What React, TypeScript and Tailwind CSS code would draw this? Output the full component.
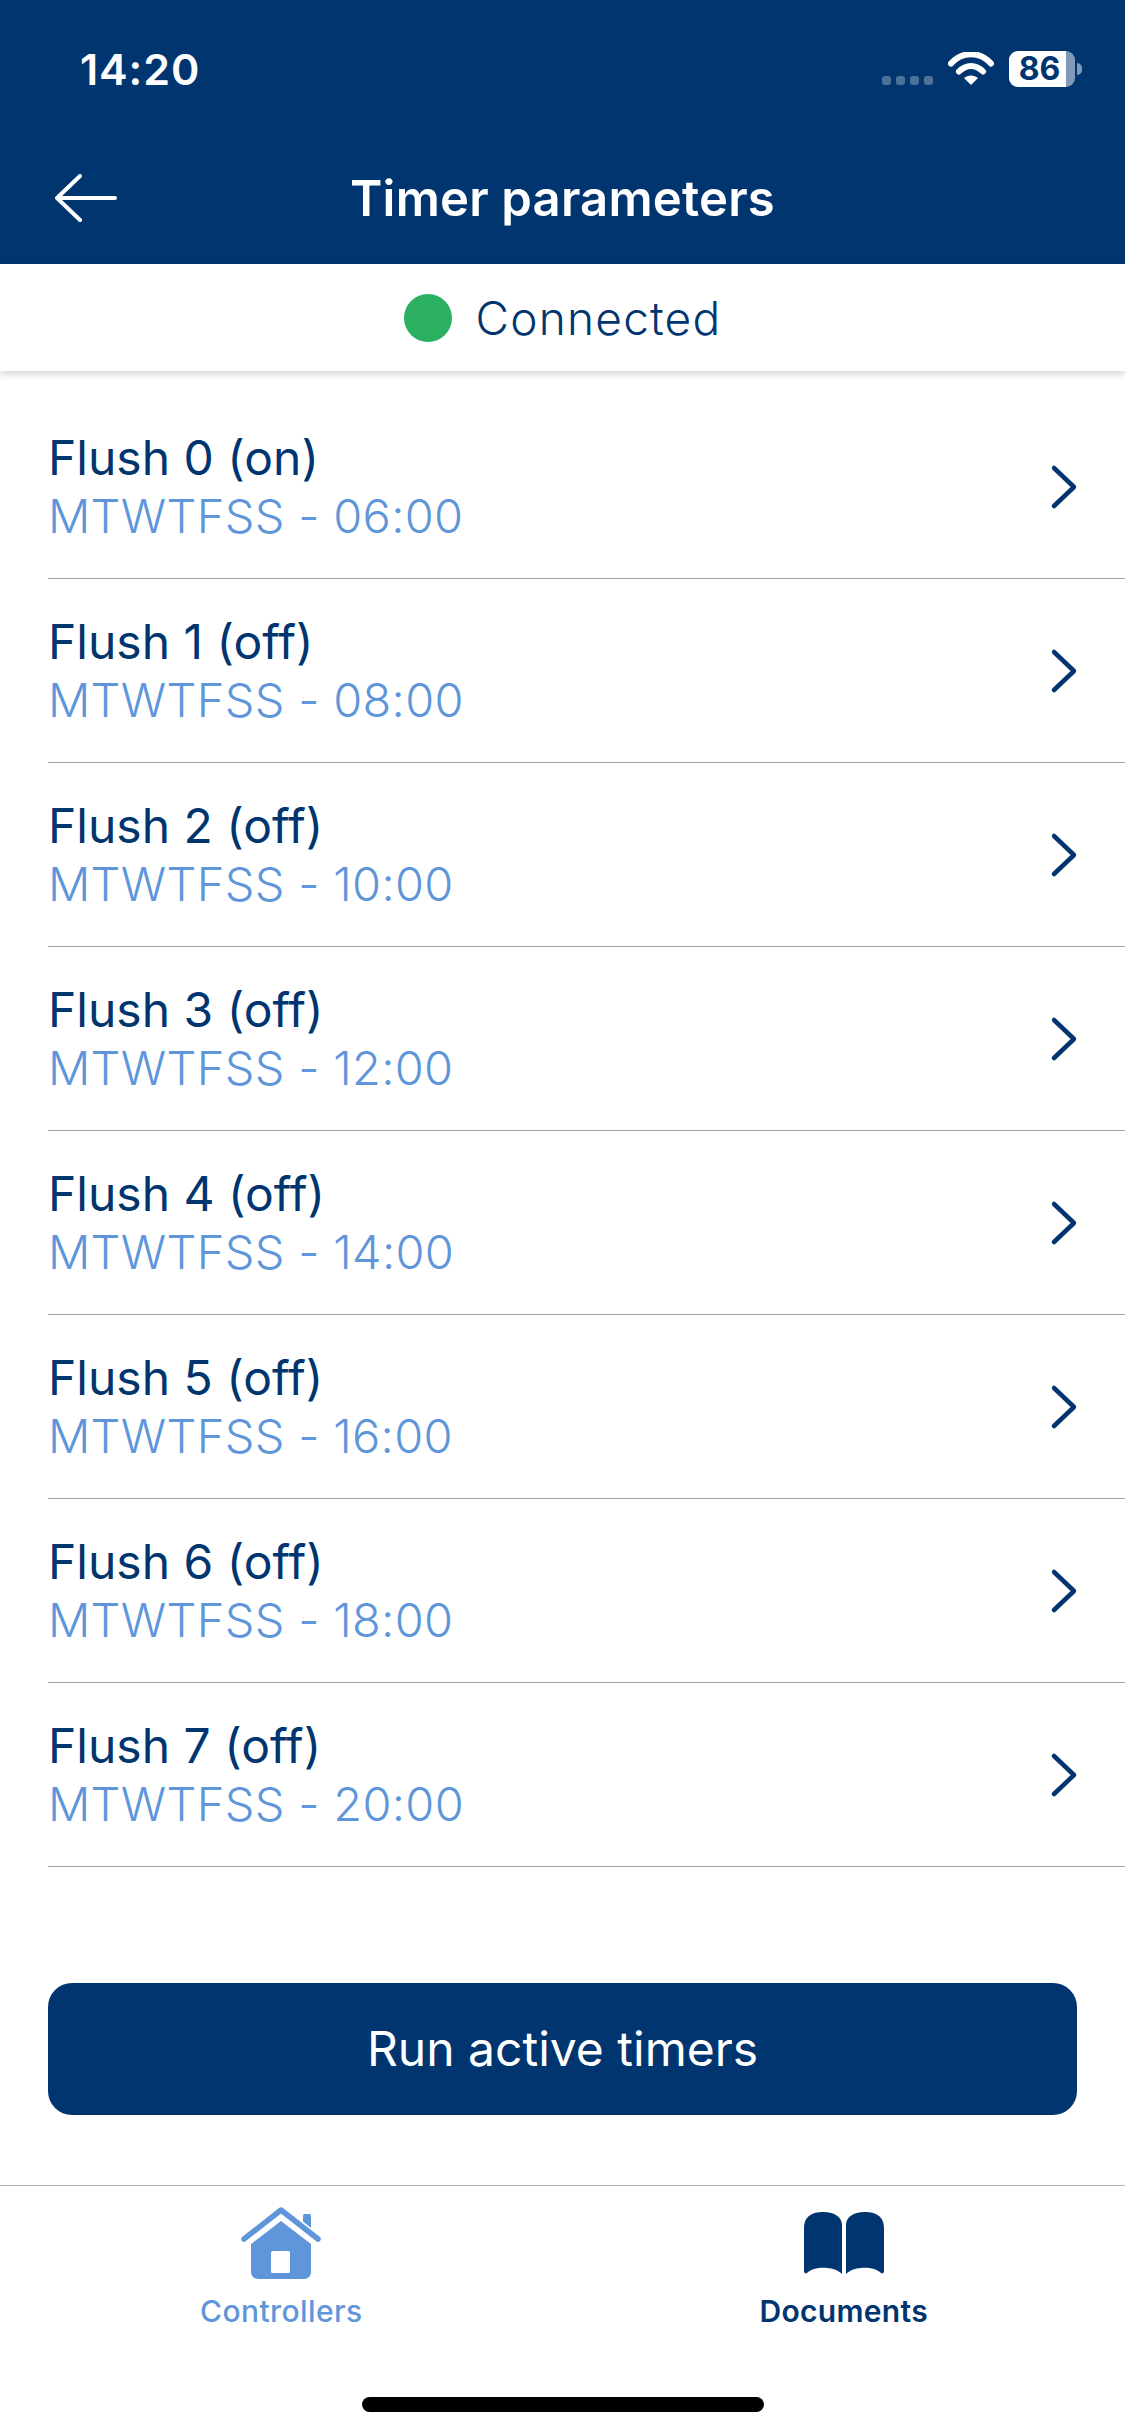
const rows = [
  ["Flush 0 (on)", "MTWTFSS - 06:00"],
  ["Flush 1 (off)", "MTWTFSS - 08:00"],
  ["Flush 2 (off)", "MTWTFSS - 10:00"],
  ["Flush 3 (off)", "MTWTFSS - 12:00"],
  ["Flush 4 (off)", "MTWTFSS - 14:00"],
  ["Flush 5 (off)", "MTWTFSS - 16:00"],
  ["Flush 6 (off)", "MTWTFSS - 18:00"],
  ["Flush 7 (off)", "MTWTFSS - 20:00"],
];

function Wifi() {
  return (
    <svg width="46" height="33" viewBox="0 0 46 33" fill="none">
      <path d="M3 11.5C14-1 32-1 43 11.5" stroke="#fff" strokeWidth="6" strokeLinecap="round" />
      <path d="M11 19.5C18 12 28 12 35 19.5" stroke="#fff" strokeWidth="6" strokeLinecap="round" />
      <path d="M16 26C20 22.5 26 22.5 30 26L23 33Z" fill="#fff" />
    </svg>
  );
}

function Chevron() {
  return (
    <svg width="30" height="46" viewBox="0 0 30 46" fill="none">
      <path d="M5 4L25 23L5 42" stroke="#00356f" strokeWidth="4.5" strokeLinecap="round" strokeLinejoin="round" />
    </svg>
  );
}

function Home() {
  return (
    <svg width="82" height="74" viewBox="0 0 82 74" fill="none">
      <path d="M11 38L41 15L71 38V66C71 70 68 73 64 73H18C14 73 11 70 11 66Z" fill="#5f96d9" />
      <rect x="63" y="8" width="8" height="20" rx="1.5" fill="#5f96d9" />
      <path d="M4 33L41 4L78 33" stroke="#fff" strokeWidth="9" strokeLinecap="round" strokeLinejoin="round" />
      <path d="M4 33L41 4L78 33" stroke="#5f96d9" strokeWidth="5.5" strokeLinecap="round" strokeLinejoin="round" />
      <rect x="31" y="45" width="19" height="22" rx="1.5" fill="#fff" />
    </svg>
  );
}

function Book() {
  return (
    <svg width="80" height="64" viewBox="0 0 80 64" fill="#00356f">
      <path d="M38 13C38 6 32 0 19 0C6 0 0 6 0 16V59C0 61 2 62 3 61C10 54 30 54 38 62Z" />
      <path d="M42 13C42 6 48 0 61 0C74 0 80 6 80 16V59C80 61 78 62 77 61C70 54 50 54 42 62Z" />
    </svg>
  );
}

export default function App() {
  return (
    <div className="flex h-[2436px] w-[1125px] flex-col bg-white font-['Inter',sans-serif] text-[#00356f]">
      <div className="flex h-[264px] flex-col bg-[#00356f] text-white">
        <div className="flex h-[140px] items-start justify-between pl-[80px] pr-[43px] pt-[45px]">
          <span className="text-[43px] font-semibold leading-[48px] tracking-[0.9px]">14:20</span>
          <div className="flex items-start gap-[15px] pt-[6px]">
            <div className="mt-[25px] flex gap-[5px] opacity-30">
              <span className="h-[9px] w-[9px] rounded-[3px] bg-white" />
              <span className="h-[9px] w-[9px] rounded-[3px] bg-white" />
              <span className="h-[9px] w-[9px] rounded-[3px] bg-white" />
              <span className="h-[9px] w-[9px] rounded-[3px] bg-white" />
            </div>
            <div className="mt-[1px]">
              <Wifi />
            </div>
            <div className="flex items-center">
              <div className="flex h-[36px] w-[66px] items-center rounded-[9px] bg-white/50">
                <div className="flex h-full w-[57px] items-center justify-center rounded-l-[9px] bg-white pl-[4px] text-[32px] font-bold leading-none text-[#00356f]">
                  86
                </div>
              </div>
              <span className="ml-[2px] h-[12px] w-[5px] rounded-r-full bg-white/50" />
            </div>
          </div>
        </div>
        <div className="relative flex h-[124px] items-start justify-center pt-[30px]">
          <svg className="absolute left-[55px] top-[34px]" width="62" height="48" viewBox="0 0 62 48" fill="none">
            <path d="M25 2L2 24L25 46M2 24H60" stroke="#fff" strokeWidth="4" strokeLinecap="round" strokeLinejoin="round" />
          </svg>
          <span className="text-[49px] font-semibold leading-[58px] tracking-[0.2px]">Timer parameters</span>
        </div>
      </div>

      <div className="z-10 flex h-[107px] items-center justify-center gap-[24px] bg-white shadow-[0_3px_8px_rgba(0,0,0,0.18)]">
        <span className="h-[48px] w-[48px] rounded-full bg-[#2bb062]" />
        <span className="text-[46px] font-light leading-none tracking-[1.2px]">Connected</span>
      </div>

      <div className="mt-[24px] flex flex-col pl-[48px]">
        {rows.map(([title, sub]) => (
          <div key={title} className="flex h-[184px] items-center justify-between border-b-[1.5px] border-[#9e9e9e] pr-[46px]">
            <div className="flex flex-col">
              <span className="text-[48px] leading-[58px]">{title}</span>
              <span className="text-[47px] font-light leading-[58px] tracking-[0.3px] text-[#5f96d9]">{sub}</span>
            </div>
            <Chevron />
          </div>
        ))}
      </div>

      <div className="mx-[48px] mt-[116px] flex h-[132px] items-center justify-center rounded-[24px] bg-[#00356f] text-[48px] font-normal text-white">
        Run active timers
      </div>

      <div className="relative mt-[70px] flex flex-1 border-t-[1.5px] border-[#b3b3b3] pt-[20px]">
        <div className="flex w-1/2 flex-col items-center">
          <Home />
          <span className="mt-[11px] text-[30px] font-medium leading-[40px] tracking-[0.4px] text-[#5f96d9]">Controllers</span>
        </div>
        <div className="flex w-1/2 flex-col items-center pt-[6px]">
          <Book />
          <span className="mt-[15px] text-[30px] font-semibold leading-[40px] tracking-[0.3px]">Documents</span>
        </div>
        <span className="absolute bottom-[24px] left-[362px] h-[15px] w-[402px] rounded-full bg-black" />
      </div>
    </div>
  );
}
